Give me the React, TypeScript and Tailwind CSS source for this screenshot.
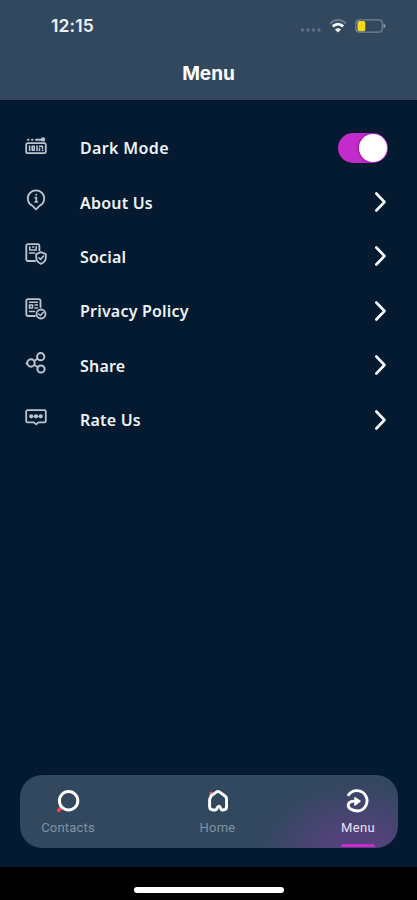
import { useState } from 'react';
import type { ReactNode } from 'react';
import clsx from 'clsx';

type IconProps = { children: ReactNode };

function RowIcon({ children }: IconProps) {
  return (
    <svg
      viewBox="0 0 22 22"
      className="h-[22px] w-[22px] shrink-0"
      fill="none"
      stroke="#bcc4cd"
      strokeWidth="1.8"
      strokeLinecap="round"
      strokeLinejoin="round"
    >
      {children}
    </svg>
  );
}

function DarkModeIcon() {
  return (
    <RowIcon>
      <path d="M3 2.8h.5M7 2.8h.5M11 2.8h6" strokeWidth="2" />
      <circle cx="18" cy="2.4" r="1.3" fill="#bcc4cd" />
      <rect x="1.2" y="6.2" width="19.6" height="10" rx="1.5" />
      <path d="M4.6 9v4.400M7.200 9.200h2v4h-2zM12 9v4.400M14.500 13.400v-2M14.500 9.200h3v2.200M17.500 13.400h.2" strokeWidth="1.6" />
    </RowIcon>
  );
}

function AboutIcon() {
  return (
    <RowIcon>
      <path d="M11 20.4 7.500 16.900A8.200 8.200 0 1 1 14.500 16.900Z" />
      <path d="M10.300 8.700h1v4.300M10 13h2.500" strokeWidth="1.7" />
      <circle cx="11.200" cy="5.700" r=".4" strokeWidth="1.200" />
    </RowIcon>
  );
}

function SocialIcon() {
  return (
    <RowIcon>
      <path d="M10 18H3a1.700 1.700 0 0 1-1.700-1.700V2.800A1.700 1.700 0 0 1 3 1.100h9.700a1.700 1.700 0 0 1 1.700 1.700V7.500" />
      <path d="M4.700 3.700v3.200h6.500V3.500M7.500 4h1.200M4.500 10h5" strokeWidth="1.500" />
      <path d="m16 9.200 4.800 1.900v3.500c0 3-1.800 5-4.800 6.200-3-1.200-4.800-3.200-4.800-6.200v-3.500Z" />
      <path d="m13.900 14.800 1.600 1.600 3-3.400" strokeWidth="1.600" />
    </RowIcon>
  );
}

function PrivacyIcon() {
  return (
    <RowIcon>
      <path d="M10 18H3a1.700 1.700 0 0 1-1.700-1.700V2.800A1.700 1.700 0 0 1 3 1.100h10.800a1.700 1.700 0 0 1 1.700 1.700V9" />
      <path d="M4.500 4.200h7.800M4.500 7h3v3h-3zM10 7h2.500M10 10h2.500M4.500 13.500h5" strokeWidth="1.600" />
      <circle cx="16" cy="16" r="4.500" />
      <path d="m13.800 16 1.500 1.500 2.900-3" strokeWidth="1.600" />
    </RowIcon>
  );
}

function ShareIcon() {
  return (
    <RowIcon>
      <circle cx="6" cy="11" r="3.700" strokeWidth="2" />
      <circle cx="15.700" cy="4.700" r="3.600" strokeWidth="2" />
      <circle cx="16" cy="17" r="3.600" strokeWidth="2" />
      <path d="m9.300 8.800 3.300-2M9.300 13l3.300 2M1.500 11.500h.5" />
    </RowIcon>
  );
}

function RateIcon() {
  return (
    <RowIcon>
      <path d="M2.500 3.200h17a1.300 1.300 0 0 1 1.300 1.300v9.600a1.300 1.300 0 0 1-1.300 1.300h-6L11.200 17.400l-2.300-2H2.500a1.300 1.300 0 0 1-1.300-1.300V4.500a1.300 1.300 0 0 1 1.300-1.300Z" />
      <circle cx="6.200" cy="9.300" r="1.200" />
      <circle cx="11" cy="9.300" r="1.200" />
      <circle cx="15.800" cy="9.300" r="1.200" />
      <path d="M6.200 9.300h9.600" strokeWidth="1" />
    </RowIcon>
  );
}

const LINKS = [
  { label: 'About Us', icon: <AboutIcon /> },
  { label: 'Social', icon: <SocialIcon /> },
  { label: 'Privacy Policy', icon: <PrivacyIcon /> },
  { label: 'Share', icon: <ShareIcon /> },
  { label: 'Rate Us', icon: <RateIcon /> },
];

function StatusBar() {
  return (
    <div className="flex h-[50px] items-center justify-between pt-[2px] pr-[31px] pl-[51px]">
      <span className="font-['Inter',sans-serif] text-[17.500px] font-semibold tracking-[0.100px] text-[#edf2f7]">
        12:15
      </span>
      <div className="flex items-center">
        <svg viewBox="0 0 22 14" className="mr-[7px] h-[14px] w-[22px]" fill="#5d7288">
          <circle cx="2.500" cy="11" r="1.700" />
          <circle cx="8" cy="11" r="1.700" />
          <circle cx="13.500" cy="11" r="1.700" />
          <circle cx="19" cy="11" r="1.700" />
        </svg>
        <svg viewBox="0 0 18 14" className="mr-[8px] h-[14px] w-[18px]" fill="none">
          <path d="M1 4.300Q9-2.400 17 4.300" stroke="#65788e" strokeWidth="2.200" />
          <path d="M3.800 7.400Q9 2.800 14.200 7.400" stroke="#fff" strokeWidth="2.800" />
          <path d="M9 13.500 6 10.500Q9 8 12 10.500Z" fill="#fff" />
        </svg>
        <svg viewBox="0 0 31 14" className="h-[14px] w-[31px]" fill="none">
          <rect x=".8" y=".8" width="26.500" height="12.400" rx="3.500" stroke="#71849a" strokeWidth="1.200" />
          <rect x="2.500" y="2" width="7.800" height="10.200" rx="1.800" fill="#f5d916" />
          <path d="M28.500 4.500c2.600 1 2.600 4 0 5Z" fill="#8697a9" />
        </svg>
      </div>
    </div>
  );
}

function ContactsIcon() {
  return (
    <svg viewBox="0 0 24 24" className="h-6 w-6" fill="none">
      <path d="m2.800 21.400 2.400-2.600" stroke="#e34b4e" strokeWidth="3.600" strokeLinecap="round" />
      <circle cx="12.600" cy="11.800" r="9.200" stroke="#fff" strokeWidth="3" />
    </svg>
  );
}

function HomeIcon() {
  return (
    <svg viewBox="0 0 24 24" className="h-6 w-6" fill="none">
      <circle cx="5" cy="4.400" r="1.900" fill="#e34b65" />
      <path
        d="M4.600 8.300Q4.700 7.200 5.600 6.500L10.300 3.100Q12 2 13.700 3.100L19 7Q20.300 8 20.500 9.700L20.600 17.500Q20.500 21 17 21H16.200Q15.400 21 15 20.100L14.200 18.200Q13 16 11.500 18.200L10.600 20.200Q10.200 21 9.300 21H7.500Q3.700 21 3.600 17.500V11Q3.600 9.500 4.600 8.300Z"
        stroke="#fff"
        strokeWidth="2.900"
        strokeLinejoin="round"
      />
    </svg>
  );
}

function MenuIcon() {
  return (
    <svg viewBox="0 0 24 24" className="h-6 w-6" fill="none" stroke="#fff" strokeWidth="2.900" strokeLinecap="round">
      <path d="M2.600 5.800A10.200 10.200 0 1 1 11.800 22C6.500 22 2.200 19.500 2.200 16.300C2.200 13.800 4.500 12.100 9 12.100" />
      <path d="m9 8.800 5 3.300-5 3.800Z" fill="#fff" strokeWidth="1.600" strokeLinejoin="round" />
    </svg>
  );
}

type TabProps = { label: string; active?: boolean; icon: ReactNode };

function Tab({ label, active, icon }: TabProps) {
  return (
    <button className="relative flex h-full w-[54px] flex-col items-center pt-[14px]">
      {icon}
      <span
        className={clsx(
          "mt-[6px] font-['Roboto',sans-serif] text-[13px] leading-[18px]",
          active ? 'tracking-[0.4px] text-[#e9e4f4]' : 'tracking-[0.2px] text-[#8292a5]',
        )}
      >
        {label}
      </span>
      {active && <span className="absolute bottom-px h-[3px] w-[34px] rounded-t-full bg-[#c42bc7]" />}
    </button>
  );
}

export default function App() {
  const [darkMode, setDarkMode] = useState(true);

  return (
    <div className="flex h-[900px] w-full flex-col overflow-hidden bg-[#031a31] font-['Noto_Sans',sans-serif]">
      <header className="h-[100px] shrink-0 bg-[#32485f] shadow-[0_1px_2px_#00102a]">
        <StatusBar />
        <h1 className="text-center font-['Inter',sans-serif] text-[19px] leading-[48px] font-bold text-white">Menu</h1>
      </header>

      <main className="flex-1 pt-[20.500px]">
        <div className="flex h-[54.400px] items-center pr-[29px] pl-[25px]">
          <DarkModeIcon />
          <span className="ml-[33px] pt-px text-[16px] font-semibold tracking-[0.350px] text-[#eff2f5]">Dark Mode</span>
          <button
            role="switch"
            aria-checked={darkMode}
            onClick={() => setDarkMode(!darkMode)}
            className={clsx(
              'ml-auto flex h-[30px] w-[50px] items-center rounded-full px-px',
              darkMode ? 'justify-end bg-[#c32bca]' : 'justify-start bg-[#71849a]',
            )}
          >
            <span className="h-7 w-7 rounded-full bg-white shadow-[-1px_0_2px_#68107699]" />
          </button>
        </div>
        {LINKS.map(({ label, icon }) => (
          <button key={label} className="flex h-[54.400px] w-full items-center pr-[30px] pl-[25px]">
            <span className="pb-[4px]">{icon}</span>
            <span className="ml-[33px] pt-px text-[16px] font-semibold tracking-[0.200px] text-[#eff2f5]">
              {label}
            </span>
            <svg viewBox="0 0 14 22" className="ml-auto h-[22px] w-[14px]" fill="none">
              <path
                d="m3.300 2.500 8.200 8.500-8.200 8.500"
                stroke="#f7f9fb"
                strokeWidth="2.600"
                strokeLinecap="round"
                strokeLinejoin="round"
              />
            </svg>
          </button>
        ))}
      </main>

      <nav className="mr-[19px] mb-[19px] ml-5 flex h-[73px] shrink-0 rounded-[22px] bg-[#32485f] bg-[radial-gradient(ellipse_100px_80px_at_338px_85px,#5d3d7a,#52427a_35%,#32485f00)] pr-[13px] pl-[21px]">
        <Tab label="Contacts" icon={<ContactsIcon />} />
        <div className="ml-[95.500px]">
          <Tab label="Home" icon={<HomeIcon />} />
        </div>
        <div className="ml-auto">
          <Tab label="Menu" icon={<MenuIcon />} active />
        </div>
      </nav>

      <footer className="flex h-[33px] shrink-0 items-start justify-center bg-black pt-5">
        <div className="h-[6px] w-[150px] rounded-full bg-white" />
      </footer>
    </div>
  );
}
